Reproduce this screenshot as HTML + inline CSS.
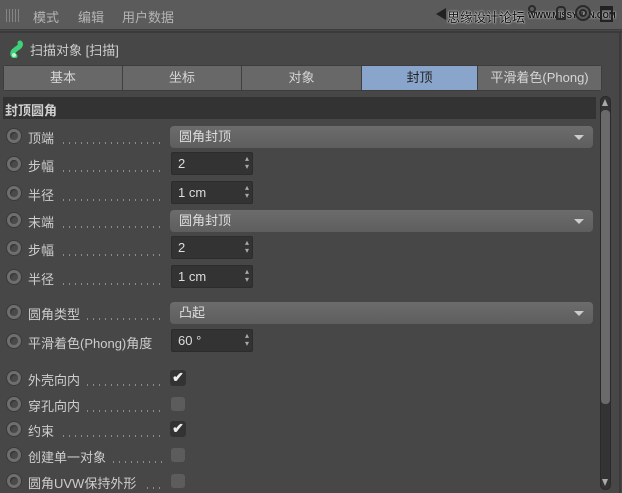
<!DOCTYPE html>
<html><head><meta charset="utf-8"><style>
*{margin:0;padding:0;box-sizing:border-box}
body{width:622px;height:493px;background:#474747;font-family:"Liberation Sans","Noto Sans CJK SC",sans-serif;font-size:13px;color:#cfcfcf;position:relative;overflow:hidden}
.a{position:absolute}
.top{left:0;top:0;width:622px;height:30px;background:#5b5b5b;border-bottom:1px solid #3c3c3c}
.menu{top:7px;color:#b4b4b4;font-size:13px}
.tab{top:66px;height:24px;background:#686868;border-right:1px solid #3f3f3f;text-align:center;line-height:24px;color:#d6d6d6;font-size:13px}
.radio{left:6px;width:16px;height:16px;border-radius:50%;background:#6e6e6e;border:1px solid #3a3a3a}
.radio:after{content:"";position:absolute;left:3px;top:3px;width:8px;height:8px;border-radius:50%;background:#4a4a4a;box-shadow:inset 1px 1px 1px #333}
.lbl{left:28px;color:#cdcdcd;font-size:13px;white-space:nowrap}
.dots{height:2px;top:0;background:repeating-linear-gradient(90deg,#8c8c8c 0 1px,transparent 1px 6px)}
.dd{left:170px;width:423px;height:22px;background:linear-gradient(#6c6c6c,#5e5e5e);border-radius:4px;color:#ddd;padding-left:9px;line-height:22px}
.dd:after{content:"";position:absolute;right:9px;top:9px;border-left:5px solid transparent;border-right:5px solid transparent;border-top:5px solid #ccc}
.num{left:171px;width:82px;height:23px;background:#333;border:1px solid #2c2c2c;border-radius:2px;color:#ddd;padding-left:6px;line-height:22px}
.num:after{content:"▴\A▾";white-space:pre;position:absolute;right:3px;top:2px;font-size:8px;line-height:8px;color:#aaa}
.cb{left:171px;width:14px;height:14px;border-radius:3px;background:#5c5c5c}
.cbk{left:170px;width:16px;height:16px;border-radius:3px;background:#333;color:#eee;font-size:14px;line-height:15px;text-align:center;font-weight:bold}
</style></head><body>
<div class="a top"></div>
<div class="a" style="left:6px;top:9px;width:13px;height:13px;background:repeating-linear-gradient(90deg,#8a8a8a 0 1px,transparent 1px 3px),repeating-linear-gradient(0deg,#5b5b5b 0 1px,transparent 1px 3px);opacity:.9"></div>
<div class="a menu" style="left:33px">模式</div>
<div class="a menu" style="left:78px">编辑</div>
<div class="a menu" style="left:122px">用户数据</div>
<div class="a" style="left:436px;top:8px;border-top:6px solid transparent;border-bottom:6px solid transparent;border-right:10px solid #222"></div>
<div class="a" style="left:447px;top:7px;color:#111;font-size:13px;text-shadow:0 0 2px #fff,0 0 1px #fff">思缘设计论坛</div>
<div class="a" style="left:528px;top:11px;color:#111;font-size:8px;font-weight:bold;text-shadow:0 0 2px #fff">WWW.MISSYUAN.COM</div>
<div class="a" style="left:528px;top:5px;width:8px;height:8px;border:2px solid #2a2a2a;border-radius:50%"></div>
<div class="a" style="left:556px;top:6px;width:10px;height:14px;border:2px solid #2a2a2a;border-radius:4px 4px 1px 1px"></div>
<div class="a" style="left:575px;top:5px;width:16px;height:16px;border:2px solid #2a2a2a;border-radius:50%;box-shadow:inset 0 0 0 2px #5b5b5b,inset 0 0 0 4px #2a2a2a"></div>
<div class="a" style="left:600px;top:6px;width:13px;height:16px;border:2px solid #222;border-top-width:4px"></div>
<div class="a" style="left:0;top:31px;width:622px;height:2px;background:#3a3a3a"></div>
<div class="a" style="left:9px;top:40px;width:14px;height:18px">
<svg width="14" height="18"><path d="M11 3 C13 6 8 8 6 10 C3 12 3 16 6 16" stroke="#3fd07a" stroke-width="5" fill="none" stroke-linecap="round"/><circle cx="5" cy="15" r="2" fill="#bff5d0"/></svg></div>
<div class="a" style="left:30px;top:40px;color:#cdcdcd">扫描对象 [扫描]</div>
<div class="a" style="left:3px;top:65px;width:599px;height:26px;background:#3d3d3d;border-radius:3px"></div>
<div class="a tab" style="left:4px;width:119px">基本</div>
<div class="a tab" style="left:123px;width:119px">坐标</div>
<div class="a tab" style="left:242px;width:120px">对象</div>
<div class="a tab" style="left:362px;width:116px;background:#89a5cc;color:#222">封顶</div>
<div class="a tab" style="left:478px;width:123px;border:none">平滑着色(Phong)</div>
<div class="a" style="left:3px;top:97px;width:593px;height:22px;background:#333"></div>
<div class="a" style="left:5px;top:100px;font-weight:bold;color:#d0d0d0">封顶圆角</div>
<div class="a" style="left:600px;top:96px;width:11px;height:394px;background:#333;border-radius:5px;border:1px solid #2a2a2a"></div>
<div class="a" style="left:601px;top:110px;width:9px;height:294px;background:#6a6a6a;border-radius:4px"></div>
<div class="a" style="left:602px;top:99px;border-left:3.5px solid transparent;border-right:3.5px solid transparent;border-bottom:7px solid #aaa"></div>
<div class="a" style="left:602px;top:479px;border-left:3.5px solid transparent;border-right:3.5px solid transparent;border-top:7px solid #aaa"></div>
<div class="a" style="left:619px;top:33px;width:2px;height:460px;background:#3a3a3a"></div>

<div class="a radio" style="top:128px"></div><div class="a lbl" style="top:128px">顶端</div><div class="a dots" style="left:63px;width:102px;top:142px"></div><div class="a dd" style="top:126px">圆角封顶</div>
<div class="a radio" style="top:156px"></div><div class="a lbl" style="top:156px">步幅</div><div class="a dots" style="left:63px;width:102px;top:170px"></div><div class="a num" style="top:152px">2</div>
<div class="a radio" style="top:185px"></div><div class="a lbl" style="top:185px">半径</div><div class="a dots" style="left:63px;width:102px;top:199px"></div><div class="a num" style="top:181px">1 cm</div>
<div class="a radio" style="top:212px"></div><div class="a lbl" style="top:212px">末端</div><div class="a dots" style="left:63px;width:102px;top:226px"></div><div class="a dd" style="top:210px">圆角封顶</div>
<div class="a radio" style="top:240px"></div><div class="a lbl" style="top:240px">步幅</div><div class="a dots" style="left:63px;width:102px;top:254px"></div><div class="a num" style="top:236px">2</div>
<div class="a radio" style="top:269px"></div><div class="a lbl" style="top:269px">半径</div><div class="a dots" style="left:63px;width:102px;top:283px"></div><div class="a num" style="top:265px">1 cm</div>
<div class="a radio" style="top:304px"></div><div class="a lbl" style="top:304px">圆角类型</div><div class="a dots" style="left:87px;width:78px;top:318px"></div><div class="a dd" style="top:302px">凸起</div>
<div class="a radio" style="top:333px"></div><div class="a lbl" style="top:333px">平滑着色(Phong)角度</div><div class="a num" style="top:329px">60 °</div>
<div class="a radio" style="top:370px"></div><div class="a lbl" style="top:370px">外壳向内</div><div class="a dots" style="left:87px;width:78px;top:384px"></div><div class="a cbk" style="top:370px">✔</div>
<div class="a radio" style="top:396px"></div><div class="a lbl" style="top:396px">穿孔向内</div><div class="a dots" style="left:87px;width:78px;top:410px"></div><div class="a cb" style="top:397px"></div>
<div class="a radio" style="top:421px"></div><div class="a lbl" style="top:421px">约束</div><div class="a dots" style="left:63px;width:102px;top:435px"></div><div class="a cbk" style="top:421px">✔</div>
<div class="a radio" style="top:447px"></div><div class="a lbl" style="top:447px">创建单一对象</div><div class="a dots" style="left:113px;width:52px;top:461px"></div><div class="a cb" style="top:448px"></div>
<div class="a radio" style="top:473px"></div><div class="a lbl" style="top:473px">圆角UVW保持外形</div><div class="a dots" style="left:147px;width:18px;top:487px"></div><div class="a cb" style="top:474px"></div>
</body></html>
